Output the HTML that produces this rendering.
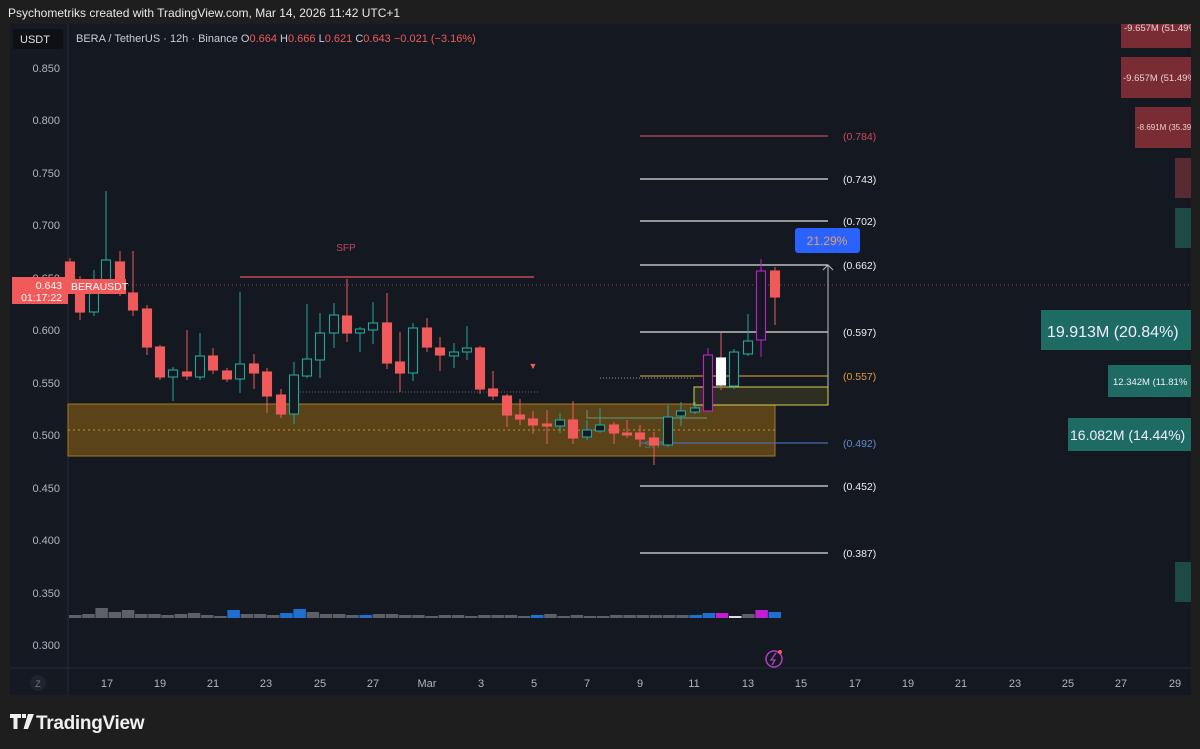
<!DOCTYPE html>
<html><head><meta charset="utf-8">
<style>
body{margin:0;width:1200px;height:749px;background:#1e1e1e;overflow:hidden;font-family:"Liberation Sans",sans-serif}
svg{position:absolute;left:0;top:0}
</style></head><body>
<svg id="s" width="1200" height="749" xmlns="http://www.w3.org/2000/svg" font-family="Liberation Sans, sans-serif">
<rect x="10" y="24" width="1181" height="671" fill="#141821"/>
<rect x="10" y="24" width="58" height="671" fill="#151922"/>
<line x1="68" y1="24" x2="68" y2="695" stroke="#262a35"/>
<line x1="10" y1="668" x2="1191" y2="668" stroke="#262a35"/>
<text x="8" y="17" fill="#e8e8e8" font-size="12">Psychometriks created with TradingView.com, Mar 14, 2026 11:42 UTC+1</text>
<rect x="13" y="29" width="50" height="20" rx="2" fill="#0e1016"/>
<text x="20" y="43" fill="#e0e0e0" font-size="11">USDT</text>
<text x="76" y="42" font-size="11" fill="#c9ccd4">BERA / TetherUS · 12h · Binance <tspan fill="#c9ccd4">O</tspan><tspan fill="#f05a5a">0.664</tspan> <tspan fill="#c9ccd4">H</tspan><tspan fill="#f05a5a">0.666</tspan> <tspan fill="#c9ccd4">L</tspan><tspan fill="#f05a5a">0.621</tspan> <tspan fill="#c9ccd4">C</tspan><tspan fill="#f05a5a">0.643</tspan> <tspan fill="#f05a5a">−0.021 (−3.16%)</tspan></text>
<g fill="#b2b5be" font-size="11" text-anchor="end">
<text x="60" y="72">0.850</text><text x="60" y="124">0.800</text><text x="60" y="177">0.750</text><text x="60" y="229">0.700</text><text x="60" y="282">0.650</text><text x="60" y="334">0.600</text><text x="60" y="387">0.550</text><text x="60" y="439">0.500</text><text x="60" y="492">0.450</text><text x="60" y="544">0.400</text><text x="60" y="597">0.350</text><text x="60" y="649">0.300</text>
</g>
<g fill="#b2b5be" font-size="11" text-anchor="middle">
<circle cx="38" cy="683" r="8" fill="#1f232d"/><text x="38" y="687" font-size="9" fill="#777">Z</text>
<text x="107" y="687">17</text><text x="160" y="687">19</text><text x="213" y="687">21</text><text x="266" y="687">23</text><text x="320" y="687">25</text><text x="373" y="687">27</text><text x="427" y="687">Mar</text><text x="481" y="687">3</text><text x="534" y="687">5</text><text x="587" y="687">7</text><text x="640" y="687">9</text><text x="694" y="687">11</text><text x="748" y="687">13</text><text x="801" y="687">15</text><text x="855" y="687">17</text><text x="908" y="687">19</text><text x="961" y="687">21</text><text x="1015" y="687">23</text><text x="1068" y="687">25</text><text x="1121" y="687">27</text><text x="1175" y="687">29</text>
</g>
<rect x="68" y="404" width="707" height="52" fill="#5a4318" stroke="#a27a2a" stroke-width="1"/>
<line x1="68" y1="430" x2="775" y2="430" stroke="#b8903a" stroke-dasharray="2,3"/>
<rect x="694" y="387" width="134" height="18" fill="#2e2e22" stroke="#d8cc5a"/>
<text x="708" y="402" fill="#26a69a" font-size="10" text-anchor="middle">▲</text>
<line x1="68" y1="285" x2="1191" y2="285" stroke="#a04a4a" stroke-dasharray="1,3"/>
<line x1="240" y1="277" x2="534" y2="277" stroke="#c2455a" stroke-width="1.5"/>
<text x="346" y="251" fill="#c2455a" font-size="10" text-anchor="middle">SFP</text>
<line x1="294" y1="392" x2="540" y2="392" stroke="#666" stroke-dasharray="1,2"/>
<line x1="600" y1="378" x2="695" y2="378" stroke="#7a9" stroke-dasharray="1,2"/>
<polyline points="587,410 587,418 707,418" fill="none" stroke="#6a9a7a"/>
<text x="654" y="448" fill="#4d7d6a" font-size="10" text-anchor="middle">SFP</text>
<g stroke-width="1.3">
<line x1="640" y1="136" x2="828" y2="136" stroke="#c2455a"/>
<line x1="640" y1="179" x2="828" y2="179" stroke="#ddd"/>
<line x1="640" y1="221" x2="828" y2="221" stroke="#ddd"/>
<line x1="640" y1="265" x2="828" y2="265" stroke="#ddd"/>
<line x1="640" y1="332" x2="828" y2="332" stroke="#ddd"/>
<line x1="640" y1="376" x2="828" y2="376" stroke="#c58a3a"/>
<line x1="640" y1="443" x2="828" y2="443" stroke="#4a6aa8"/>
<line x1="640" y1="486" x2="828" y2="486" stroke="#ddd"/>
<line x1="640" y1="553" x2="828" y2="553" stroke="#ddd"/>
</g>
<g font-size="10.5">
<text x="843" y="140" fill="#d0485a">(0.784)</text>
<text x="843" y="183" fill="#eee">(0.743)</text>
<text x="843" y="225" fill="#eee">(0.702)</text>
<text x="843" y="269" fill="#eee">(0.662)</text>
<text x="843" y="336" fill="#eee">(0.597)</text>
<text x="843" y="380" fill="#e09a3a">(0.557)</text>
<text x="843" y="447" fill="#6a8ad0">(0.492)</text>
<text x="843" y="490" fill="#eee">(0.452)</text>
<text x="843" y="557" fill="#eee">(0.387)</text>
</g>
<line x1="828" y1="266" x2="828" y2="387" stroke="#bbb"/>
<polyline points="823,270 828,265 833,270" fill="none" stroke="#bbb"/>
<rect x="795" y="228" width="65" height="25" rx="3" fill="#2962ff"/>
<text x="827" y="245" fill="#e8a060" font-size="12" text-anchor="middle">21.29%</text>
<rect x="1121" y="24" width="70" height="24" fill="#7a2c34"/>
<text x="1124" y="31" fill="#e8d0d0" font-size="9.5">-9.657M (51.49%</text>
<rect x="1121" y="57" width="70" height="41" fill="#7a2c34"/>
<text x="1123" y="81" fill="#e8d0d0" font-size="9.5">-9.657M (51.49%</text>
<rect x="1135" y="107" width="56" height="41" fill="#7a2c34"/>
<text x="1137" y="130" fill="#e8d0d0" font-size="8">-8.691M (35.39</text>
<rect x="1175" y="158" width="16" height="40" fill="#5a2a32"/>
<rect x="1175" y="208" width="16" height="40" fill="#1d4a45"/>
<rect x="1041" y="310" width="150" height="40" fill="#1d6b62"/>
<text x="1047" y="337" fill="#eef" font-size="16">19.913M (20.84%)</text>
<rect x="1108" y="365" width="83" height="32" fill="#1d6b62"/>
<text x="1113" y="385" fill="#eef" font-size="9.5">12.342M (11.81%</text>
<rect x="1068" y="418" width="123" height="33" fill="#1d6b62"/>
<text x="1070" y="440" fill="#eef" font-size="14">16.082M (14.44%)</text>
<rect x="1175" y="562" width="16" height="40" fill="#1d4a45"/>
<rect x="1191" y="0" width="9" height="749" fill="#1e1e1e"/>
<g id="c"></g><g id="v"></g>
<rect x="12" y="277" width="56" height="27" fill="#f05a5a"/>
<text x="62" y="289" fill="#fff" font-size="10.5" text-anchor="end">0.643</text>
<text x="62" y="301" fill="#fff" font-size="10.5" text-anchor="end">01:17:22</text>
<rect x="68" y="279" width="58" height="15" fill="#f05a5a"/>
<text x="71" y="290" fill="#fff" font-size="10.5">BERAUSDT</text>
<text x="533" y="369" fill="#f05a5a" font-size="9" text-anchor="middle">▼</text>
<circle cx="774" cy="659" r="8" fill="none" stroke="#b040c0" stroke-width="1.5"/>
<path d="M776 653 L771 660 L775 660 L772 665" fill="none" stroke="#b040c0" stroke-width="1.3"/>
<circle cx="780" cy="652" r="2" fill="#f05a5a"/>
<path d="M10 714h11v4h-3.5v11h-4v-11h-3.5z M22 714h4v4h-4z M28 714h6l-6 15h-4.5z" fill="#f0f0f0"/>
<text x="36" y="729" fill="#f0f0f0" font-size="19" font-weight="bold" letter-spacing="-0.3">TradingView</text>
</svg>
<script>
var d=[[70,262,279,258,282,'r'],[80,280,312,276,320,'r'],[94,291,312,270,316,'g'],[106,260,291,191,293,'g'],[120,262,291,251,296,'r'],[133,293,310,251,316,'r'],[147,309,347,305,355,'r'],[160,347,377,345,380,'r'],[173,370,377,367,401,'g'],[187,372,376,330,380,'r'],[200,356,377,333,380,'g'],[213,356,370,348,374,'r'],[227,371,379,368,382,'r'],[240,364,379,292,393,'g'],[254,364,373,354,389,'r'],[267,372,396,368,413,'r'],[281,395,414,389,418,'r'],[294,375,414,362,424,'g'],[307,359,376,304,378,'g'],[320,333,360,313,378,'g'],[334,315,333,303,348,'g'],[347,316,333,279,342,'r'],[360,329,333,327,352,'g'],[373,323,330,302,344,'g'],[387,323,363,293,369,'r'],[400,362,373,332,392,'r'],[413,328,373,323,381,'g'],[427,328,347,318,352,'r'],[440,348,355,337,371,'r'],[454,352,356,343,368,'g'],[467,348,352,326,360,'g'],[480,348,389,346,394,'r'],[493,389,396,371,400,'r'],[507,396,415,394,427,'r'],[520,415,419,399,425,'r'],[533,419,425,411,434,'r'],[547,424,426,410,444,'r'],[560,420,426,413,433,'g'],[573,420,438,401,444,'r'],[587,430,437,420,440,'g'],[600,425,431,408,433,'g'],[614,425,433,422,444,'r'],[627,433,435,420,438,'r'],[640,433,439,425,447,'r'],[654,438,445,432,465,'r'],[668,417,445,405,447,'g'],[681,411,416,402,426,'g'],[695,408,412,402,414,'g'],[708,355,411,348,412,'p'],[721,358,385,333,390,'w'],[734,352,386,349,389,'g'],[748,341,354,314,356,'g'],[761,271,340,259,357,'p'],[775,271,297,267,325,'r']];
var h='';d.forEach(function(c){var x=c[0],col=c[5]=='r'?'#f05a5a':c[5]=='g'?'#26a69a':c[5]=='p'?'#c020d0':'#fff';
var wc=c[5]=='w'?'#f05a5a':col;
h+='<line x1="'+x+'" y1="'+c[3]+'" x2="'+x+'" y2="'+c[4]+'" stroke="'+wc+'"/>';
var fill=(c[5]=='r'||c[5]=='w')?col:'#141821';
h+='<rect x="'+(x-4.5)+'" y="'+c[1]+'" width="9" height="'+Math.max(2,c[2]-c[1])+'" fill="'+fill+'" stroke="'+col+'" stroke-width="1.1"/>';});
document.getElementById('c').innerHTML=h;
var v='';for(var i=0;i<54;i++){var x=69+i*13.2;var hh=[3,4,10,6,8,4,4,3,4,5,3,2,8,4,4,3,5,9,6,4,4,3,3,4,4,3,3,2,3,3,2,3,3,3,2,3,4,2,3,2,2,3,3,3,3,3,3,3,5,5,2,4,8,6][i];
var col=[12,16,17,22,35,47,48,49,52,53].indexOf(i)>=0?'#1e6fd0':'#5d6068';if(i==49||i==52)col='#c020d0';if(i==50)col='#ddd';
v+='<rect x="'+x+'" y="'+(618-hh)+'" width="12.5" height="'+hh+'" fill="'+col+'"/>';}
document.getElementById('v').innerHTML=v;
</script>
</body></html>
